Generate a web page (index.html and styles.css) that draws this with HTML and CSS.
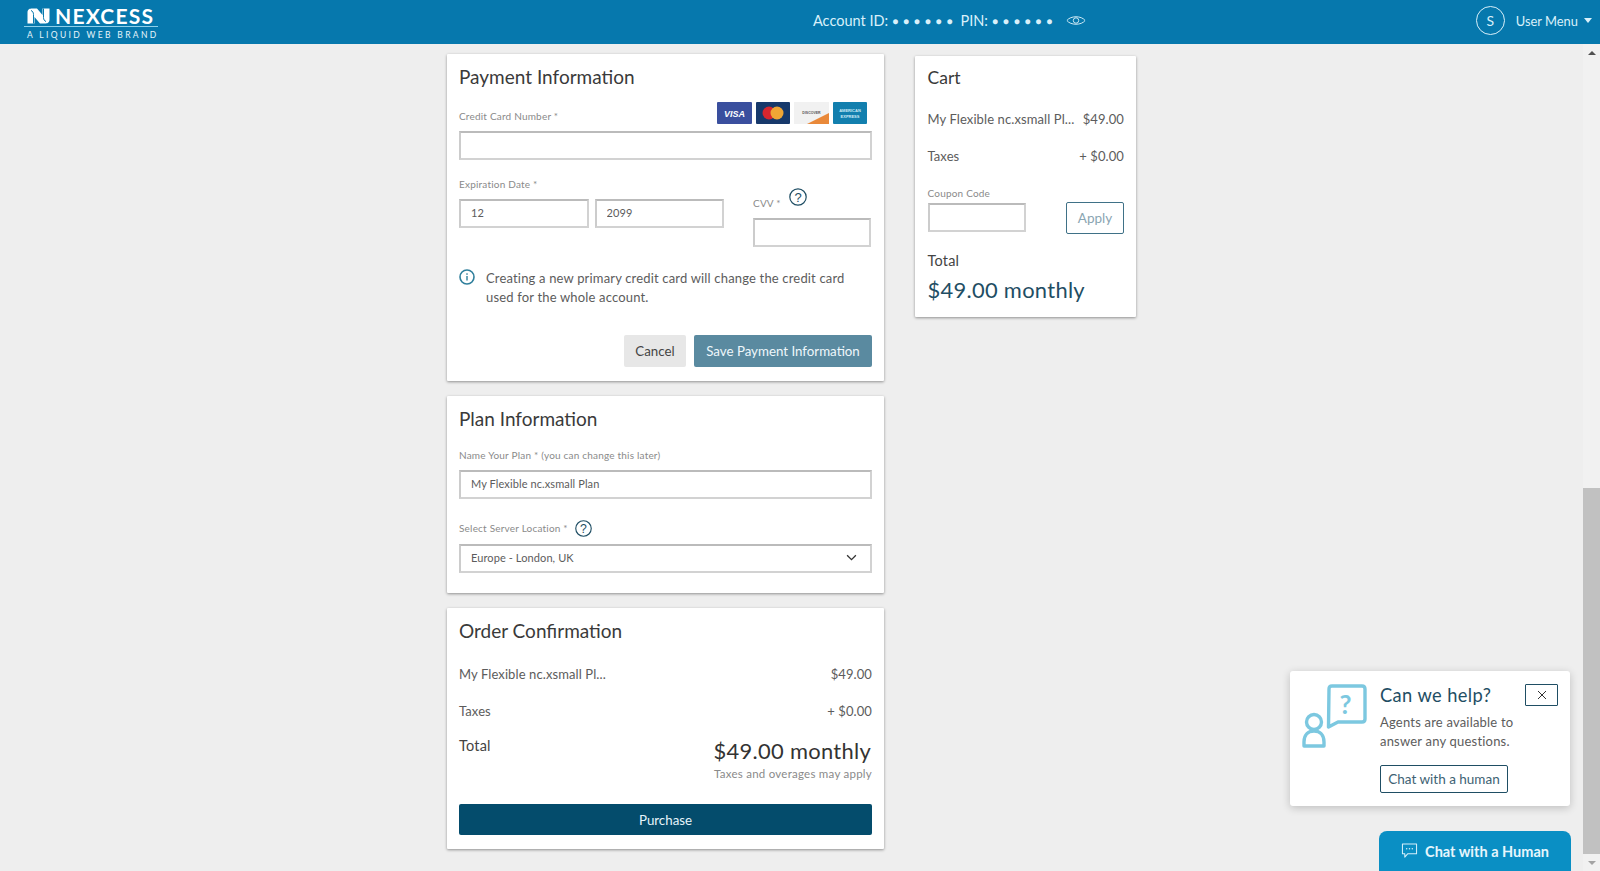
FILE: index.html
```html
<!DOCTYPE html>
<html lang="en">
<head>
<meta charset="utf-8">
<title>Nexcess Checkout</title>
<link rel="stylesheet" href="styles.css">
</head>
<body>
<header class="topbar">
  <div class="logo">
    <div class="logo-top">
      <svg class="logo-mark" viewBox="0 0 23 16" width="23" height="16"><path d="M0.500 15.500V4.500C0.500 1 3 0.500 5 0.500H10L15.500 7V0.500H22.500V11.500C22.500 15 20 15.500 18 15.500H13L7.500 9V15.500Z" fill="#fff"/><path d="M6.500 15.500V6.500C6.500 4.500 5.500 3 4 2.500M16.500 0.500V9.500C16.500 11.500 17.500 13 19 13.500" fill="none" stroke="#0678ad" stroke-width="1"/></svg>
      <span class="logo-name">NEXCESS</span>
    </div>
    <div class="logo-sub">A LIQUID WEB BRAND</div>
  </div>
  <div class="account">
    <span>Account ID:</span><span class="dots">● ● ● ● ● ●</span>
    <span class="pin">PIN:</span><span class="dots">● ● ● ● ● ●</span>
    <svg class="eye" viewBox="0 0 22 14" width="20" height="13"><path d="M1 7C5 1.500 17 1.500 21 7C17 12.500 5 12.500 1 7Z" fill="none" stroke="#cfeaf5" stroke-width="1.100"/><circle cx="11" cy="7" r="3" fill="none" stroke="#cfeaf5" stroke-width="1.100"/></svg>
  </div>
  <div class="user">
    <span class="avatar">S</span>
    <span class="user-label">User Menu</span>
    <span class="caret"></span>
  </div>
</header>

<main class="page">
  <div class="col-left">
    <section class="card card-pay">
      <h2 class="title">Payment Information</h2>
      <div class="cc-row">
        <label class="lbl">Credit Card Number *</label>
        <div class="cc-icons">
          <svg class="cc" viewBox="0 0 35 22" width="35" height="22"><rect width="35" height="22" rx="1" fill="#3a4f9e"/><text x="17.500" y="15" class="cc-visa">VISA</text></svg>
          <svg class="cc" viewBox="0 0 34 22" width="34" height="22"><rect width="34" height="22" rx="1" fill="#17396b"/><circle cx="13" cy="11" r="6.500" fill="#d8262f"/><circle cx="21" cy="11" r="6.500" fill="#f0a635"/></svg>
          <svg class="cc" viewBox="0 0 35 22" width="35" height="22"><rect width="35" height="22" fill="#f1f1f1"/><path d="M13 22L35 11V22Z" fill="#e9893a"/><text x="17.500" y="12" class="cc-disc">DISCOVER</text></svg>
          <svg class="cc" viewBox="0 0 34 22" width="34" height="22"><rect width="34" height="22" rx="1" fill="#127fae"/><text x="17" y="9.500" class="cc-amex">AMERICAN</text><text x="17" y="16" class="cc-amex">EXPRESS</text></svg>
        </div>
      </div>
      <input class="field" type="text" aria-label="Credit Card Number">
      <div class="exp-row">
        <div class="exp">
          <label class="lbl">Expiration Date *</label>
          <div class="exp-fields">
            <input class="field field-exp" type="text" value="12" aria-label="Month">
            <input class="field field-exp" type="text" value="2099" aria-label="Year">
          </div>
        </div>
        <div class="cvv">
          <div class="cvv-label"><label class="lbl lbl-cvv">CVV *</label>
            <svg class="help" viewBox="0 0 18 18" width="18" height="18"><circle cx="9" cy="9" r="8.200" fill="none" stroke="#1f4e64" stroke-width="1.200"/><text x="9" y="13.500" class="help-q">?</text></svg>
          </div>
          <input class="field" type="text" aria-label="CVV">
        </div>
      </div>
      <div class="note">
        <svg class="info" viewBox="0 0 16 16" width="16" height="16"><circle cx="8" cy="8" r="7" fill="none" stroke="#2f7f9c" stroke-width="1.600"/><rect x="7.300" y="7" width="1.400" height="4.500" fill="#2f7f9c"/><rect x="7.300" y="4.300" width="1.400" height="1.500" fill="#2f7f9c"/></svg>
        <p>Creating a new primary credit card will change the credit card used for the whole account.</p>
      </div>
      <div class="actions">
        <button class="btn btn-cancel">Cancel</button>
        <button class="btn btn-save">Save Payment Information</button>
      </div>
    </section>

    <section class="card card-plan">
      <h2 class="title">Plan Information</h2>
      <label class="lbl lbl-name">Name Your Plan * (you can change this later)</label>
      <input class="field" type="text" value="My Flexible nc.xsmall Plan" aria-label="Plan name">
      <div class="loc-label"><label class="lbl">Select Server Location *</label>
        <svg class="help" viewBox="0 0 18 18" width="17" height="17"><circle cx="9" cy="9" r="8.200" fill="none" stroke="#1f4e64" stroke-width="1.200"/><text x="9" y="13.500" class="help-q">?</text></svg>
      </div>
      <div class="field select"><span>Europe - London, UK</span>
        <svg viewBox="0 0 12 8" width="11" height="7"><path d="M1 1.500L6 6.500L11 1.500" fill="none" stroke="#333" stroke-width="1.500"/></svg>
      </div>
    </section>

    <section class="card card-order">
      <h2 class="title">Order Confirmation</h2>
      <div class="row row-first"><span>My Flexible nc.xsmall Pl...</span><span>$49.00</span></div>
      <div class="row row-tax"><span>Taxes</span><span>+ $0.00</span></div>
      <div class="order-total">
        <span class="total-label">Total</span>
        <div class="total-right">
          <div class="total-price">$49.00 monthly</div>
          <div class="total-note">Taxes and overages may apply</div>
        </div>
      </div>
      <button class="btn btn-purchase">Purchase</button>
    </section>
  </div>

  <aside class="col-right">
    <section class="card card-cart">
      <h2 class="title title-cart">Cart</h2>
      <div class="row row-cart1"><span>My Flexible nc.xsmall Pl...</span><span>$49.00</span></div>
      <div class="row row-cart2"><span>Taxes</span><span>+ $0.00</span></div>
      <div class="coupon">
        <div class="coupon-left">
          <label class="lbl lbl-coupon">Coupon Code</label>
          <input class="field" type="text" aria-label="Coupon Code">
        </div>
        <button class="btn btn-apply">Apply</button>
      </div>
      <div class="cart-total">Total</div>
      <div class="cart-price">$49.00 monthly</div>
    </section>
  </aside>
</main>

<div class="scrollbar">
  <span class="arrow arrow-up"></span>
  <div class="track"><div class="thumb"></div></div>
  <span class="arrow arrow-down"></span>
</div>

<div class="help-pop">
  <svg class="pop-icon" viewBox="0 0 66 66" width="66" height="66"><g fill="none" stroke="#7cc8e0" stroke-width="3.400" stroke-linejoin="round"><path d="M27 5C27 3 28 2 30 2H60C62 2 63 3 63 5V35C63 37 62 38 60 38H36L26.500 43Z"/><circle cx="12" cy="38" r="7.500"/><path d="M2 62V58C2 50 7 47 12 47C17 47 22 50 22 58V62Z"/></g><text x="43.500" y="30" class="pop-q">?</text></svg>
  <div class="pop-body">
    <div class="pop-head"><span class="pop-title">Can we help?</span>
      <button class="pop-close" aria-label="Close"><svg viewBox="0 0 10 10" width="10" height="10"><path d="M1 1L9 9M9 1L1 9" stroke="#333" stroke-width="1"/></svg></button>
    </div>
    <p class="pop-text">Agents are available to answer any questions.</p>
    <button class="btn pop-btn">Chat with a human</button>
  </div>
</div>

<div class="chat-tab">
  <svg viewBox="0 0 18 17" width="17" height="16"><path d="M1.500 1H16.500V11.500H7L4 15V11.500H1.500Z" fill="none" stroke="#d6f0fa" stroke-width="1.100" stroke-linejoin="round"/><circle cx="6" cy="6" r=".8" fill="#d6f0fa"/><circle cx="9" cy="6" r=".8" fill="#d6f0fa"/><circle cx="12" cy="6" r=".8" fill="#d6f0fa"/></svg>
  <span>Chat with a Human</span>
</div>
</body>
</html>
```
FILE: styles.css
```css
* { box-sizing: border-box; }
html, body { margin: 0; height: 871px; overflow: hidden; }
body { background: #eee; font-family: "Lato", "Open Sans", sans-serif; color: #5c5c5c; position: relative; font-size: 14px; }
h2, p { margin: 0; }
label { display: block; }

.topbar { height: 44px; background: #0678ad; display: flex; align-items: center; padding: 0 8px 0 24px; color: #d9f0fa; }
.logo { width: 134px; height: 44px; padding-top: 5px; color: #fff; }
.logo-top { display: flex; align-items: center; height: 20px; padding: 1px 0 0 3px; gap: 5px; }
.logo-mark { flex: none; }
.logo-name { font-size: 21px; font-weight: 700; letter-spacing: 1.200px; line-height: 20px; }
.logo-sub { border-top: 1px solid #8fd0ea; margin-top: 1px; font-size: 8.500px; letter-spacing: 2.350px; line-height: 16px; padding-left: 3px; white-space: nowrap; color: #e6f5fb; }
.account { margin-left: 655px; padding-bottom: 3px; display: flex; align-items: center; font-size: 14.500px; white-space: nowrap; }
.dots { font-size: 10px; margin-left: 4px; word-spacing: 2.300px; }
.pin { margin-left: 8px; }
.eye { margin-left: 14px; }
.user { margin-left: auto; padding-bottom: 3px; display: flex; align-items: center; font-size: 12.900px; }
.avatar { width: 29px; height: 29px; border: 1px solid #d9f0fa; border-radius: 50%; display: flex; align-items: center; justify-content: center; margin-right: 11px; font-size: 14px; }
.caret { margin-left: 6px; border: 4px solid transparent; border-top: 5px solid #d9f0fa; border-bottom: 0; }

.page { width: 1583px; display: flex; justify-content: center; gap: 31px; align-items: flex-start; padding-top: 10px; }
.col-left { width: 437px; display: flex; flex-direction: column; gap: 15px; }
.col-right { width: 221px; padding-top: 2px; }
.card { background: #fff; box-shadow: 0 1px 3px rgba(0,0,0,.4); padding: 10px 12px 0; border-radius: 1px; }
.title { font-size: 19px; font-weight: 400; color: #3a3a3a; line-height: 26px; margin-bottom: -2px; }
.lbl { font-size: 10px; color: #8a8a8a; line-height: 14px; letter-spacing: .2px; }
.field { display: block; width: 100%; height: 29px; border: 2px solid #d2d2d2; border-top-color: #bbb; border-left-color: #ccc; background: #fff; padding: 0 10px 2px; font-family: inherit; font-size: 11px; color: #5c5c5c; letter-spacing: .1px; outline: none; }

.card-pay { height: 327px; }
.cc-row { display: flex; justify-content: space-between; align-items: flex-end; margin-top: 14px; padding-right: 5px; margin-bottom: 7px; }
.cc-row .lbl { margin-bottom: 1px; }
.cc-icons { display: flex; gap: 4px; }
.cc { display: block; }
.cc-visa { font: italic 700 9px "Liberation Sans", sans-serif; fill: #fff; text-anchor: middle; }
.cc-disc { font: 700 3.500px "Liberation Sans", sans-serif; fill: #555; text-anchor: middle; }
.cc-amex { font: 700 4px "Liberation Sans", sans-serif; fill: #cdeaf6; text-anchor: middle; }
.exp-row { display: flex; justify-content: space-between; margin-top: 17px; padding-right: 1px; }
.exp { width: 265px; }
.exp .lbl { margin-bottom: 8px; }
.exp-fields { display: flex; gap: 6px; }
.cvv { width: 118px; }
.cvv-label { display: flex; align-items: center; gap: 8px; height: 18px; margin-top: 11px; margin-bottom: 12px; }
.lbl-cvv { padding-top: 12px; }
.help { flex: none; }
.help-q { font: 400 13px "Liberation Sans", sans-serif; fill: #1f4e64; text-anchor: middle; }
.note { display: flex; gap: 11px; margin-top: 22px; }
.info { flex: none; }
.note p { font-size: 13px; line-height: 19px; letter-spacing: .17px; color: #5c5c5c; padding-right: 24px; }
.actions { display: flex; justify-content: flex-end; gap: 8px; margin-top: 28px; }
.btn { font-family: inherit; border: 0; border-radius: 2px; font-size: 13.300px; }
.btn-cancel { width: 62px; height: 32px; background: #e7e7e7; color: #444; }
.btn-save { width: 178px; height: 32px; background: #5a8aa0; color: #eef7fb; }

.card-plan { height: 197px; }
.lbl-name { margin-top: 18px; margin-bottom: 8px; }
.loc-label { display: flex; align-items: center; gap: 7px; margin-top: 20px; margin-bottom: 7px; height: 18px; }
.loc-label .lbl { margin-top: -1px; }
.select { display: flex; align-items: center; justify-content: space-between; padding-right: 13px; }

.card-order { height: 241px; }
.row { display: flex; justify-content: space-between; font-size: 13px; line-height: 18px; letter-spacing: .1px; color: #5c5c5c; white-space: nowrap; }
.row-first { margin-top: 23px; }
.row-tax { margin-top: 19px; }
.order-total { display: flex; justify-content: space-between; margin-top: 17px; }
.total-label { font-size: 14.500px; color: #444; line-height: 18px; letter-spacing: .2px; }
.total-right { text-align: right; }
.total-price { font-size: 21.900px; color: #333; line-height: 28px; letter-spacing: .3px; margin-right: 1px; }
.total-note { font-size: 11.500px; color: #8a8a8a; line-height: 14px; letter-spacing: .25px; margin-top: 2px; }
.btn-purchase { display: block; width: 100%; height: 31px; background: #044c6c; color: #e6f5fb; margin-top: 23px; }

.card-cart { height: 261px; padding: 9px 12px 0 12.500px; }
.title-cart { font-size: 17.500px; }
.row-cart1 { margin-top: 21px; }
.row-cart2 { margin-top: 19px; }
.coupon { display: flex; justify-content: space-between; align-items: flex-end; margin-top: 21px; }
.coupon-left { width: 98px; }
.lbl-coupon { margin-bottom: 3px; }
.btn-apply { width: 58px; height: 32px; background: #fff; border: 1px solid #3f7187; color: #8aa5b2; font-size: 13.500px; margin-bottom: -2px; }
.cart-total { font-size: 14.500px; color: #444; line-height: 18px; letter-spacing: .2px; margin-top: 20px; }
.cart-price { font-size: 21.900px; color: #1f4e64; line-height: 28px; letter-spacing: .3px; margin-top: 6px; }

.scrollbar { position: absolute; right: 0; top: 44px; bottom: 0; width: 17px; background: #f1f1f1; display: flex; flex-direction: column; }
.arrow { flex: none; height: 17px; display: flex; align-items: center; justify-content: center; }
.arrow::after { content: ""; border: 4px solid transparent; }
.arrow-up::after { border-top: 0; border-bottom-color: #505050; }
.arrow-down::after { border-bottom: 0; border-top-color: #a3a3a3; }
.track { flex: 1; display: flex; flex-direction: column; justify-content: flex-end; }
.thumb { height: 366px; background: #c1c1c1; }

.help-pop { position: absolute; left: 1290px; top: 671px; width: 280px; height: 135px; background: #fff; border-radius: 3px; box-shadow: 0 2px 8px rgba(0,0,0,.2); display: flex; padding: 13px 12px 0 12px; }
.pop-icon { flex: none; margin-right: 12px; }
.pop-q { font: 700 26px "Lato", sans-serif; fill: #7cc8e0; text-anchor: middle; }
.pop-body { flex: 1; }
.pop-head { display: flex; justify-content: space-between; align-items: flex-start; }
.pop-title { font-size: 18.300px; color: #1f4e64; line-height: 22px; letter-spacing: .4px; }
.pop-close { width: 33px; height: 22px; background: #fff; border: 1px solid #1f4e64; border-radius: 1px; padding: 0; display: flex; align-items: center; justify-content: center; }
.pop-text { font-size: 13px; line-height: 19px; letter-spacing: .2px; color: #5c5c5c; margin-top: 7px; padding-right: 30px; }
.pop-btn { display: block; width: 128px; height: 28px; background: #fff; border: 1px solid #1f4e64; color: #3d6273; font-size: 13.500px; margin-top: 14px; padding: 0; }

.chat-tab { position: absolute; left: 1379px; top: 831px; width: 192px; height: 40px; background: #0a8fc4; border-radius: 8px 8px 0 0; display: flex; align-items: center; justify-content: center; gap: 7px; color: #e6f6fc; font-size: 14.500px; font-weight: 700; }
```
